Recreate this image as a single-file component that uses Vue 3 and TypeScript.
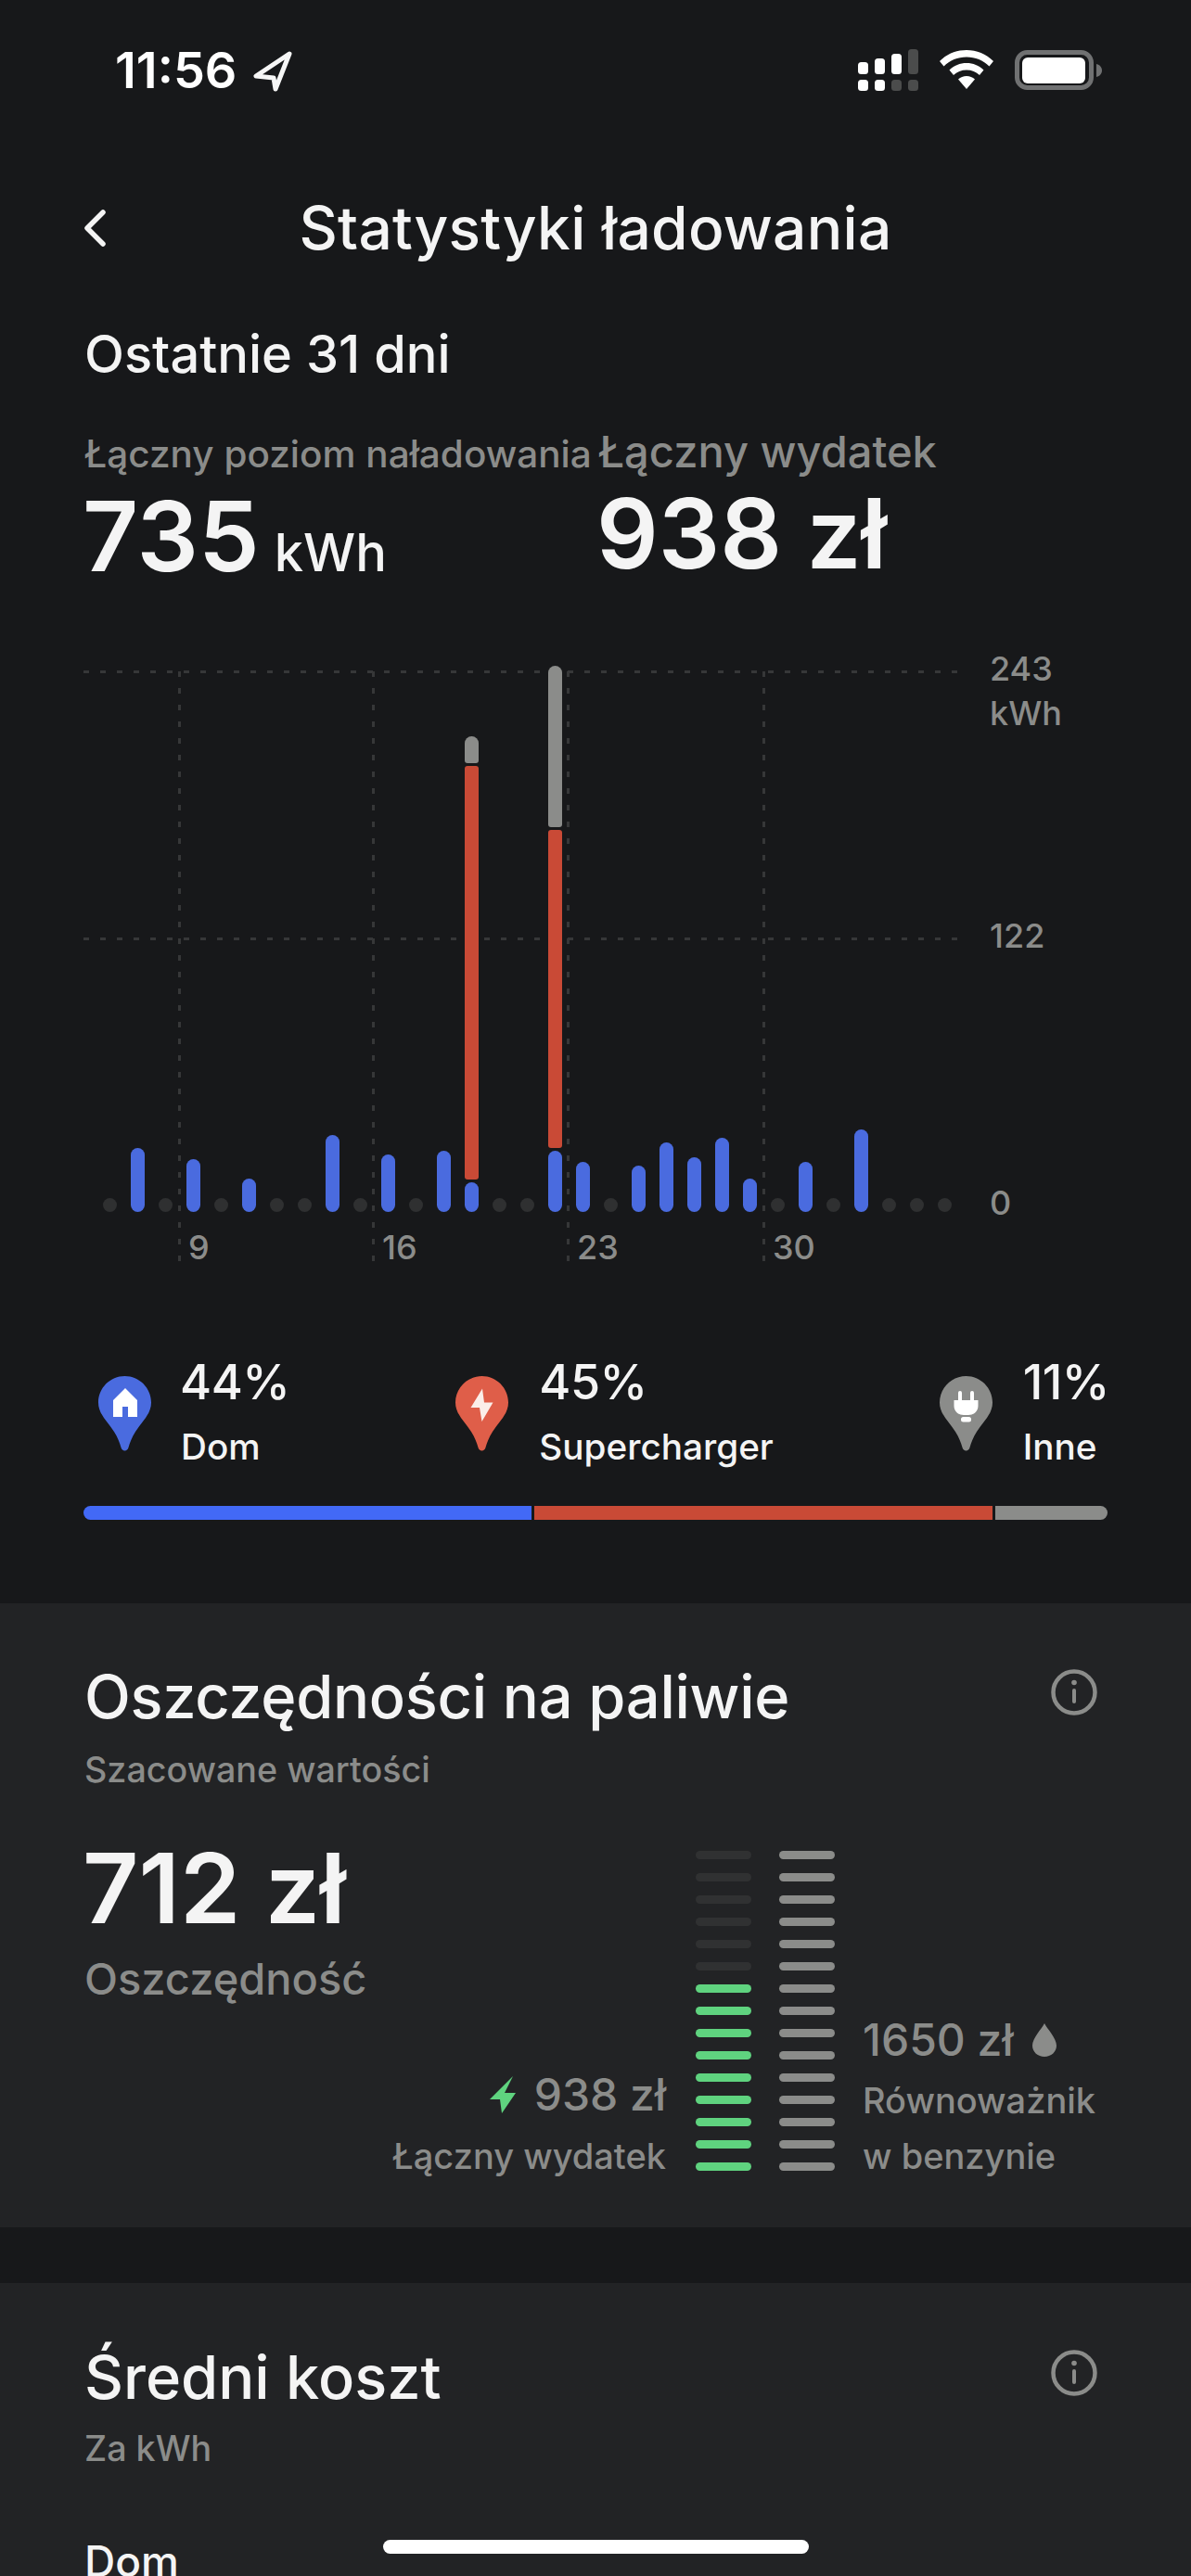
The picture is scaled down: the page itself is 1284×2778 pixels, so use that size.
<template>
  <div class="page">
    <div class="status">
      <div class="time">11:56</div>
      <svg class="arrow" width="42" height="44" viewBox="0 0 42 44">
        <path d="M39 3 L3 27 L22 29 L24 41 Z" fill="none" stroke="#f6f6f6" stroke-width="5" stroke-linejoin="round" />
      </svg>
      <svg class="signal" width="65" height="46" viewBox="0 0 65 46">
        <rect v-for="b in signalBars" :key="b.x + '-' + b.y" :x="b.x" :y="b.y" width="11" :height="b.h" rx="3.5" :fill="b.on ? '#fff' : '#4b4c4c'" />
      </svg>
      <svg class="wifi" width="58" height="42" viewBox="0 0 58 42">
        <path d="M29 0C18 0 8 4 0 12L4.500 17.500C11 11 19.500 7.500 29 7.500C38.500 7.500 47 11 53.500 17.500L58 12C50 4 40 0 29 0Z" fill="#fff" />
        <path d="M29 14C22 14 15.500 16.500 10.500 21.500L15 27C18.500 23.500 23.500 21.500 29 21.500C34.500 21.500 39.500 23.500 43 27L47.500 21.500C42.500 16.500 36 14 29 14Z" fill="#fff" />
        <path d="M29 28C25.500 28 22.500 29.300 20 31.500L29 42L38 31.500C35.500 29.300 32.500 28 29 28Z" fill="#fff" />
      </svg>
      <svg class="battery" width="95" height="44" viewBox="0 0 95 44">
        <rect x="2.500" y="2.500" width="80" height="38" rx="11" fill="none" stroke="#707172" stroke-width="5" />
        <rect x="8" y="8" width="68" height="28" rx="6" fill="#fff" />
        <path d="M88 15C92 16 94 19 94 22C94 25 92 28 88 29Z" fill="#707172" />
      </svg>
    </div>

    <div class="nav">
      <svg class="back" width="26" height="42" viewBox="0 0 26 42">
        <path d="M21 4 L4 21 L21 38" fill="none" stroke="#f4f4f4" stroke-width="5.500" stroke-linecap="round" stroke-linejoin="round" />
      </svg>
      <div class="nav-title">Statystyki ładowania</div>
    </div>

    <div class="period">Ostatnie 31 dni</div>

    <div class="totals">
      <div class="total total-energy">
        <div class="total-label small">Łączny poziom naładowania</div>
        <div class="total-value">735<span class="unit">kWh</span></div>
      </div>
      <div class="total">
        <div class="total-label">Łączny wydatek</div>
        <div class="total-value">938 zł</div>
      </div>
    </div>

    <div class="chart">
      <div class="hline" style="top: 7px"></div>
      <div class="hline" style="top: 295px"></div>
      <div v-for="t in ticks" :key="t.label" class="tick" :style="{ left: t.x + 'px' }">
        <span class="tick-label">{{ t.label }}</span>
      </div>
      <div class="bars">
        <div v-for="(day, i) in days" :key="i" class="day">
          <template v-if="day.length">
            <div v-for="(seg, j) in day" :key="j" class="seg" :class="seg.kind" :style="{ height: seg.h + 'px' }"></div>
          </template>
          <div v-else class="dot"></div>
        </div>
      </div>
      <div class="ylabel" style="top: -19px">243<br />kWh</div>
      <div class="ylabel" style="top: 269px">122</div>
      <div class="ylabel" style="top: 557px">0</div>
    </div>

    <div class="legend">
      <div class="legend-item first">
        <svg class="pin" width="57" height="82" viewBox="0 0 57 82">
          <path :d="pinPath" fill="#4a6bdf" />
          <path d="M29 13 L42 26 V44 H32 V33 H26 V44 H16 V26 Z" fill="#fff" />
        </svg>
        <div>
          <div class="pct">44%</div>
          <div class="legend-name">Dom</div>
        </div>
      </div>
      <div class="legend-item">
        <svg class="pin" width="57" height="82" viewBox="0 0 57 82">
          <path :d="pinPath" fill="#df5e49" />
          <path d="M29 13.500 L16.500 34 H26 L28.500 49 L40.500 28.500 H31 Z" fill="#fbeee9" />
        </svg>
        <div>
          <div class="pct">45%</div>
          <div class="legend-name">Supercharger</div>
        </div>
      </div>
      <div class="legend-item">
        <svg class="pin" width="57" height="82" viewBox="0 0 57 82">
          <path :d="pinPath" fill="#8b8c8a" />
          <path d="M20 18a2 2 0 0 1 4 0V26H33V18a2 2 0 0 1 4 0V26H41.500V32C41.500 38 37 42 31 42H26C20 42 15.500 38 15.500 32V26H20Z" fill="#fff" />
          <rect x="23" y="44" width="11" height="5.500" rx="2.500" fill="#fff" />
        </svg>
        <div>
          <div class="pct">11%</div>
          <div class="legend-name">Inne</div>
        </div>
      </div>
    </div>

    <div class="split">
      <div class="split-home"></div>
      <div class="split-super"></div>
      <div class="split-other"></div>
    </div>

    <section class="card card-fuel">
      <div class="card-head">
        <div>
          <div class="card-title">Oszczędności na paliwie</div>
          <div class="card-sub">Szacowane wartości</div>
        </div>
        <svg class="info" width="50" height="50" viewBox="0 0 50 50">
          <circle cx="25" cy="25" r="22.500" fill="none" stroke="#8b8c8a" stroke-width="4.500" />
          <circle cx="25" cy="14.500" r="2.800" fill="#8b8c8a" />
          <rect x="23" y="21" width="4" height="16" rx="2" fill="#8b8c8a" />
        </svg>
      </div>

      <div class="fuel">
        <div class="fuel-left">
          <div class="saved">712 zł</div>
          <div class="saved-label">Oszczędność</div>
          <div class="spent">
            <div class="spent-value">
              <svg width="28" height="40" viewBox="0 0 28 40"><path d="M25 0 L0 25 H11 L13 40 L28 18 H16 Z" fill="#5fd37f" /></svg>
              <span>938 zł</span>
            </div>
            <div class="fuel-note">Łączny wydatek</div>
          </div>
        </div>
        <div class="meter">
          <div v-for="i in 15" :key="i" class="tick-bar" :class="i > 6 ? 'green' : 'dim'"></div>
        </div>
        <div class="meter">
          <div v-for="i in 15" :key="i" class="tick-bar"></div>
        </div>
        <div class="fuel-right">
          <div class="petrol">
            <span>1650 zł</span>
            <svg width="26" height="36" viewBox="0 0 26 36"><path d="M13 0C16 6 26 16 26 24C26 31 20 36 13 36C6 36 0 31 0 24C0 16 10 6 13 0Z" fill="#8b8c8a" /></svg>
          </div>
          <div class="fuel-note">Równoważnik</div>
          <div class="fuel-note">w benzynie</div>
        </div>
      </div>
    </section>

    <section class="card card-cost">
      <div class="card-head">
        <div>
          <div class="card-title">Średni koszt</div>
          <div class="card-sub">Za kWh</div>
        </div>
        <svg class="info" width="50" height="50" viewBox="0 0 50 50">
          <circle cx="25" cy="25" r="22.500" fill="none" stroke="#8b8c8a" stroke-width="4.500" />
          <circle cx="25" cy="14.500" r="2.800" fill="#8b8c8a" />
          <rect x="23" y="21" width="4" height="16" rx="2" fill="#8b8c8a" />
        </svg>
      </div>
      <div class="cost-row">Dom</div>
    </section>

    <div class="home-indicator"></div>
  </div>
</template>

<script setup lang="ts">
interface Segment {
  kind: 'home' | 'super' | 'other'
  h: number
}

const pinPath =
  'M28.500 0C44.200 0 57 12.800 57 28.500C57 41 47 49 40 60C36 66 34 72 32.500 77C31.500 81.500 25.500 81.500 24.500 77C23 72 21 66 17 60C10 49 0 41 0 28.500C0 12.800 12.800 0 28.500 0Z'

const signalBars = [
  { x: 0, y: 14, h: 13, on: true },
  { x: 18, y: 10, h: 17, on: true },
  { x: 36, y: 5, h: 22, on: true },
  { x: 54, y: 0, h: 27, on: false },
  { x: 0, y: 33, h: 12, on: true },
  { x: 18, y: 33, h: 12, on: true },
  { x: 36, y: 33, h: 12, on: false },
  { x: 54, y: 33, h: 12, on: false },
]

const ticks = [
  { x: 192, label: '9' },
  { x: 401, label: '16' },
  { x: 611, label: '23' },
  { x: 822, label: '30' },
]

const home = (h: number): Segment[] => [{ kind: 'home', h }]

const days: Segment[][] = [
  [],
  home(69),
  [],
  home(57),
  [],
  home(36),
  [],
  [],
  home(83),
  [],
  home(62),
  [],
  home(66),
  [
    { kind: 'other', h: 29 },
    { kind: 'super', h: 446 },
    { kind: 'home', h: 32 },
  ],
  [],
  [],
  [
    { kind: 'other', h: 174 },
    { kind: 'super', h: 343 },
    { kind: 'home', h: 66 },
  ],
  home(54),
  [],
  home(50),
  home(75),
  home(59),
  home(80),
  home(36),
  [],
  home(54),
  [],
  home(89),
  [],
  [],
  [],
]
</script>

<style>
html,
body {
  margin: 0;
  background: #17181a;
}
</style>

<style scoped>
.page {
  position: relative;
  width: 1284px;
  height: 2778px;
  overflow: hidden;
  background: #17181a;
  color: #f4f4f4;
  font-family: Inter, "Noto Sans", sans-serif;
  font-weight: 500;
}

.status {
  display: flex;
  align-items: flex-start;
  height: 152px;
  box-sizing: border-box;
  padding-top: 53px;
}

.time {
  margin-left: 124px;
  width: 149px;
  font-size: 54px;
  line-height: 46px;
  font-weight: 600;
  color: #fff;
}

.arrow {
  margin-top: 2px;
}

.signal {
  margin-left: 610px;
}

.wifi {
  margin-left: 23px;
  margin-top: 1px;
}

.battery {
  margin-left: 23px;
  margin-top: 1px;
}

.nav {
  position: relative;
  height: 92px;
  margin-top: 48px;
  display: flex;
  align-items: center;
  justify-content: center;
}

.back {
  position: absolute;
  left: 90px;
  top: 25px;
}

.nav-title {
  font-size: 64px;
  line-height: 92px;
  letter-spacing: 0.300px;
}

.period {
  margin: 60px 0 0 91px;
  font-size: 56px;
  line-height: 60px;
}

.totals {
  display: flex;
  align-items: baseline;
  margin-top: 45px;
  padding-left: 91px;
}

.total-energy {
  width: 554px;
}

.total-label {
  font-size: 47px;
  line-height: 60px;
  color: #8b8c8a;
}

.total-label.small {
  font-size: 40.500px;
  white-space: nowrap;
}

.total-value {
  margin-left: -2px;
  font-size: 104.500px;
  line-height: 116px;
  font-weight: 600;
  color: #f4f4f4;
}

.unit {
  margin-left: 16px;
  font-size: 56px;
  font-weight: 500;
}

.chart {
  position: relative;
  height: 647px;
  margin-top: 62px;
}

.hline {
  position: absolute;
  left: 90px;
  width: 944px;
  height: 3px;
  background: repeating-linear-gradient(90deg, #363738 0 6px, transparent 6px 18px);
}

.tick {
  position: absolute;
  top: 8px;
  width: 3px;
  height: 639px;
  background: repeating-linear-gradient(180deg, #363738 0 6px, transparent 6px 18px);
}

.tick-label {
  position: absolute;
  left: 11px;
  bottom: 0;
  font-size: 36px;
  line-height: 36px;
  color: #8b8c8a;
}

.bars {
  position: relative;
  display: flex;
  align-items: flex-end;
  gap: 15px;
  height: 591px;
  margin-left: 111px;
}

.day {
  display: flex;
  flex-direction: column;
  gap: 3px;
  width: 15px;
}

.dot {
  width: 15px;
  height: 15px;
  border-radius: 50%;
  background: #2f3031;
}

.seg {
  border-radius: 3px;
}

.seg.home {
  background: #4a6bdf;
  border-radius: 7.500px 7.500px 7.500px 7.500px;
}

.seg.super {
  background: #c94a36;
}

.seg.other {
  background: #8b8c8a;
  border-radius: 7.500px 7.500px 3px 3px;
}

.ylabel {
  position: absolute;
  left: 1067px;
  font-size: 36px;
  line-height: 48px;
  color: #8b8c8a;
}

.legend {
  display: flex;
  justify-content: space-between;
  margin-top: 98px;
  padding: 0 88px 0 106px;
}

.legend-item {
  display: flex;
  align-items: flex-start;
  gap: 33px;
}

.legend-item.first {
  gap: 31px;
}

.legend-item.first .legend-name {
  margin-left: 1px;
}

.pin {
  margin-top: 23px;
}

.pct {
  font-size: 52px;
  line-height: 60px;
  letter-spacing: -0.500px;
}

.legend-name {
  margin-top: 16px;
  font-size: 38.700px;
  line-height: 46px;
}

.split {
  display: flex;
  gap: 3px;
  height: 15px;
  margin: 41px 90px 0;
  border-radius: 8px;
  overflow: hidden;
}

.split-home {
  width: 483px;
  background: #4269f6;
}

.split-super {
  width: 494px;
  background: #c94a36;
}

.split-other {
  flex: 1;
  background: #8b8c8a;
}

.card {
  background: #222325;
  padding: 0 101px 0 91px;
}

.card-fuel {
  height: 673px;
  margin-top: 90px;
  box-sizing: border-box;
  padding-top: 65px;
}

.card-cost {
  height: 317px;
  margin-top: 60px;
  box-sizing: border-box;
  padding-top: 66px;
}

.card-head {
  display: flex;
  justify-content: space-between;
  align-items: flex-start;
}

.card-title {
  font-size: 65px;
  line-height: 72px;
}

.card-fuel .card-title {
  letter-spacing: -0.300px;
}

.card-sub {
  margin-top: 19px;
  font-size: 37.700px;
  line-height: 46px;
  color: #8b8c8a;
}

.card-cost .card-sub {
  margin-top: 17px;
}

.info {
  margin-top: 6px;
}

.fuel {
  display: flex;
  align-items: flex-start;
  height: 345px;
  margin-top: 65px;
}

.fuel-left {
  position: relative;
  width: 629px;
  flex: none;
}

.saved {
  margin-top: -5px;
  margin-left: -2px;
  font-size: 105px;
  line-height: 90px;
  font-weight: 600;
}

.saved-label {
  margin-top: 25px;
  font-size: 47px;
  line-height: 56px;
  color: #8b8c8a;
}

.spent {
  display: flex;
  flex-direction: column;
  align-items: flex-end;
  margin-top: 73px;
  padding-right: 2px;
}

.spent-value {
  display: flex;
  align-items: center;
  gap: 20px;
  font-size: 48px;
  line-height: 48px;
  color: #8b8c8a;
}

.fuel-note {
  font-size: 38px;
  line-height: 60px;
  color: #8b8c8a;
  white-space: nowrap;
}

.spent .fuel-note {
  margin-top: 12px;
}

.meter {
  display: flex;
  flex-direction: column;
  gap: 15px;
  width: 60px;
  flex: none;
  margin-left: 30px;
}

.tick-bar {
  height: 9px;
  border-radius: 4.500px;
  background: #8b8c8a;
}

.tick-bar.dim {
  background: #303132;
}

.tick-bar.green {
  background: #5fd37f;
}

.fuel-right {
  margin-left: 30px;
  padding-top: 180px;
  flex: none;
}

.petrol {
  display: flex;
  align-items: center;
  gap: 20px;
  height: 48px;
  font-size: 48px;
  line-height: 48px;
  color: #8b8c8a;
  margin-bottom: 11px;
}

.cost-row {
  margin-top: 71px;
  font-size: 46px;
  line-height: 56px;
}

.home-indicator {
  position: absolute;
  left: 413px;
  top: 2739px;
  width: 459px;
  height: 15px;
  border-radius: 8px;
  background: #fff;
}
</style>
